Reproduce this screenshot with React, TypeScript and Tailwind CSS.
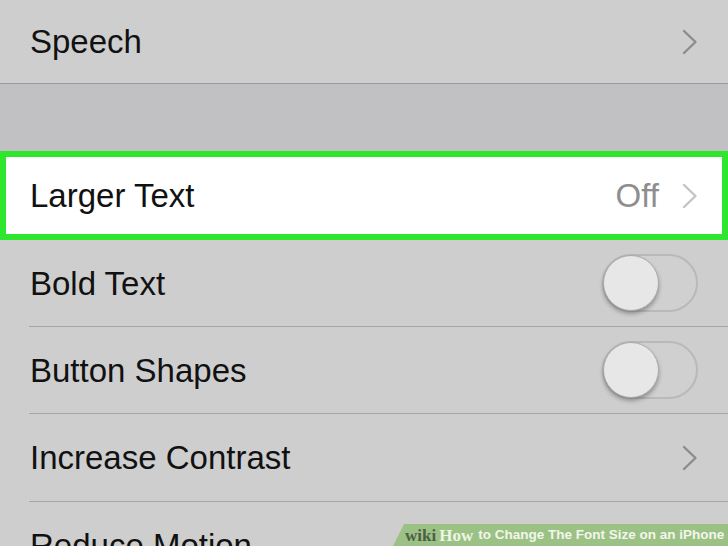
import React from "react";

const font = { fontFamily: '"Liberation Sans", Arial, sans-serif' };

function Chevron({ light }: { light?: boolean }) {
  return (
    <svg width="16" height="26" viewBox="0 0 16 26" className="shrink-0">
      <path
        d="M2 2 L13.5 13 L2 24"
        fill="none"
        stroke={light ? "#c4c4c7" : "#8c8c8c"}
        strokeWidth="2.4"
        strokeLinecap="round"
        strokeLinejoin="round"
      />
    </svg>
  );
}

function Toggle() {
  return (
    <div className="relative w-[96px] h-[58px] rounded-full border-2 border-[#b9b9b9] bg-[#d0d0d0] shrink-0">
      <div className="absolute left-[-1px] top-[-1px] w-[56px] h-[56px] rounded-full bg-[#e7e7e7] border border-[#a9a9a9] shadow-[0_3px_4px_rgba(0,0,0,0.3)]" />
    </div>
  );
}

export default function App() {
  return (
    <div className="relative w-[728px] h-[546px] overflow-hidden bg-[#cecece]" style={font}>
      <div className="flex flex-col">
        <div className="flex items-center justify-between pl-[30px] pr-[30px] h-[83px]">
          <span className="text-[33px] leading-none text-[#111]">Speech</span>
          <Chevron />
        </div>
        <div className="h-px bg-[#9a9a9a]" />
        <div className="h-[67px] bg-[#c1c1c3]" />
        <div className="h-[89px] border-[6px] border-[#2ee62e] bg-white flex items-center justify-between pl-[24px] pr-[24px]">
          <span className="text-[33px] leading-none text-[#111]">Larger Text</span>
          <div className="flex items-center gap-[23px]">
            <span className="text-[33px] leading-none text-[#8e8e8e]">Off</span>
            <Chevron light />
          </div>
        </div>
        <div className="flex items-center justify-between pl-[30px] pr-[30px] h-[86px]">
          <span className="text-[33px] leading-none text-[#111]">Bold Text</span>
          <Toggle />
        </div>
        <div className="ml-[29px] h-px bg-[#a6a6a6]" />
        <div className="flex items-center justify-between pl-[30px] pr-[30px] h-[86px]">
          <span className="text-[33px] leading-none text-[#111]">Button Shapes</span>
          <Toggle />
        </div>
        <div className="ml-[29px] h-px bg-[#a6a6a6]" />
        <div className="flex items-center justify-between pl-[30px] pr-[30px] h-[87px]">
          <span className="text-[33px] leading-none text-[#111]">Increase Contrast</span>
          <Chevron />
        </div>
        <div className="ml-[29px] h-px bg-[#a6a6a6]" />
        <div className="flex items-center justify-between pl-[30px] pr-[30px] h-[86px]">
          <span className="text-[33px] leading-none text-[#111]">Reduce Motion</span>
        </div>
      </div>
      <div className="absolute left-[393px] top-[524px] w-[335px] h-[22px] bg-[#9cc184] [clip-path:polygon(11px_0,100%_0,100%_100%,0_100%)] flex items-center pl-[12px] whitespace-nowrap">
        <span
          className="text-[17px] font-bold leading-none text-[#4f5e46]"
          style={{ fontFamily: '"Liberation Serif", "DejaVu Serif", serif' }}
        >
          wiki
        </span>
        <span
          className="ml-[3px] text-[17px] font-bold leading-none text-[#eef4e6]"
          style={{ fontFamily: '"Liberation Serif", "DejaVu Serif", serif' }}
        >
          How
        </span>
        <span className="ml-[5px] text-[13.5px] font-bold leading-none text-[#f2f6ec]">
          to Change The Font Size on an iPhone
        </span>
      </div>
    </div>
  );
}
